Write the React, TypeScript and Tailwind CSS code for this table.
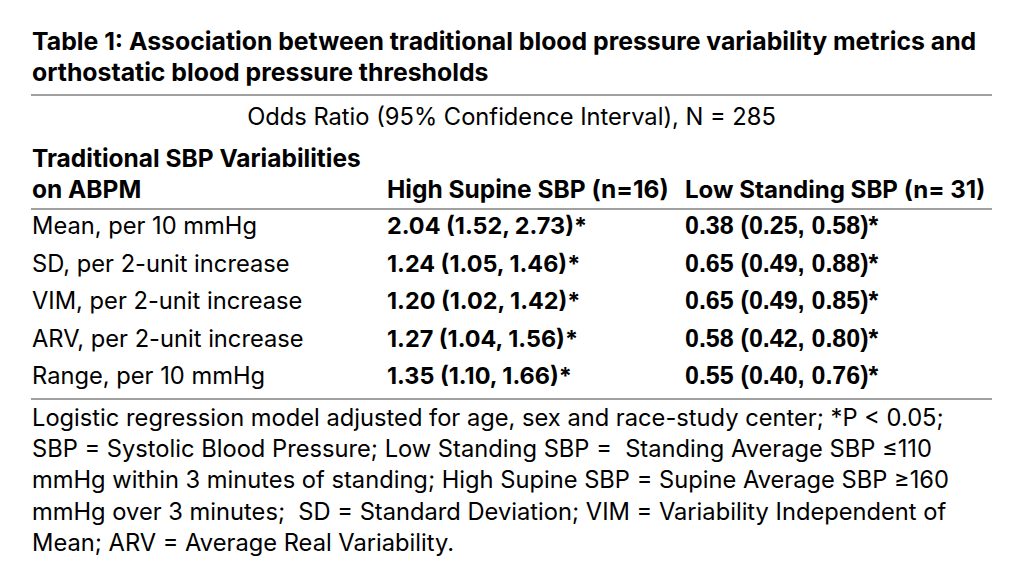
import React from "react";

const rows = [
  { label: "Mean, per 10 mmHg", high: "2.04 (1.52, 2.73)*", low: "0.38 (0.25, 0.58)*" },
  { label: "SD, per 2-unit increase", high: "1.24 (1.05, 1.46)*", low: "0.65 (0.49, 0.88)*" },
  { label: "VIM, per 2-unit increase", high: "1.20 (1.02, 1.42)*", low: "0.65 (0.49, 0.85)*" },
  { label: "ARV, per 2-unit increase", high: "1.27 (1.04, 1.56)*", low: "0.58 (0.42, 0.80)*" },
  { label: "Range, per 10 mmHg", high: "1.35 (1.10, 1.66)*", low: "0.55 (0.40, 0.76)*" },
];

const App = () => {
  return (
    <div className="w-[1019px] h-[583px] bg-white text-black pl-[31px] pt-[26px] [font-family:Inter,sans-serif] text-[23.7px] leading-[31px]">
      <div className="w-[961px]">
        <h1 className="font-bold text-[24.8px] pl-[1px] whitespace-nowrap">
          Table 1: Association between traditional blood pressure variability metrics and
          <br />
          orthostatic blood pressure thresholds
        </h1>
        <div className="mt-[6px] border-t-2 border-[#a0a0a0]" />
        <p className="mt-[5px] text-center">Odds Ratio (95% Confidence Interval), N = 285</p>

        <div className="mt-[11px] grid grid-cols-[356px_298px_1fr] items-end font-bold text-[24.5px] pb-[3px]">
          <div className="pl-[1px]">
            Traditional SBP Variabilities
            <br />
            on ABPM
          </div>
          <div className="whitespace-nowrap">High Supine SBP (n=16)</div>
          <div className="whitespace-nowrap text-[24.1px]">Low Standing SBP (n= 31)</div>
        </div>
        <div className="border-t-2 border-[#a0a0a0]" />

        {rows.map((row) => (
          <div key={row.label} className="grid grid-cols-[356px_298px_1fr] items-center h-[37.5px] pb-[6px]">
            <div className="pl-[1px] whitespace-nowrap">{row.label}</div>
            <div className="font-bold whitespace-nowrap text-[23.4px]">{row.high}</div>
            <div className="font-bold whitespace-nowrap [font-family:'Liberation_Sans',Arial,sans-serif] text-[25px]">
              {row.low}
            </div>
          </div>
        ))}
        <div className="border-t-2 border-[#a0a0a0]" />

        <p className="mt-[2px] pl-[1px] whitespace-nowrap leading-[31.4px]">
          Logistic regression model adjusted for age, sex and race-study center; *P &lt; 0.05;
          <br />
          SBP = Systolic Blood Pressure; Low Standing SBP = &nbsp;Standing Average SBP ≤110
          <br />
          mmHg within 3 minutes of standing; High Supine SBP = Supine Average SBP ≥160
          <br />
          mmHg over 3 minutes; &nbsp;SD = Standard Deviation; VIM = Variability Independent of
          <br />
          Mean; ARV = Average Real Variability.
        </p>
      </div>
    </div>
  );
};

export default App;
